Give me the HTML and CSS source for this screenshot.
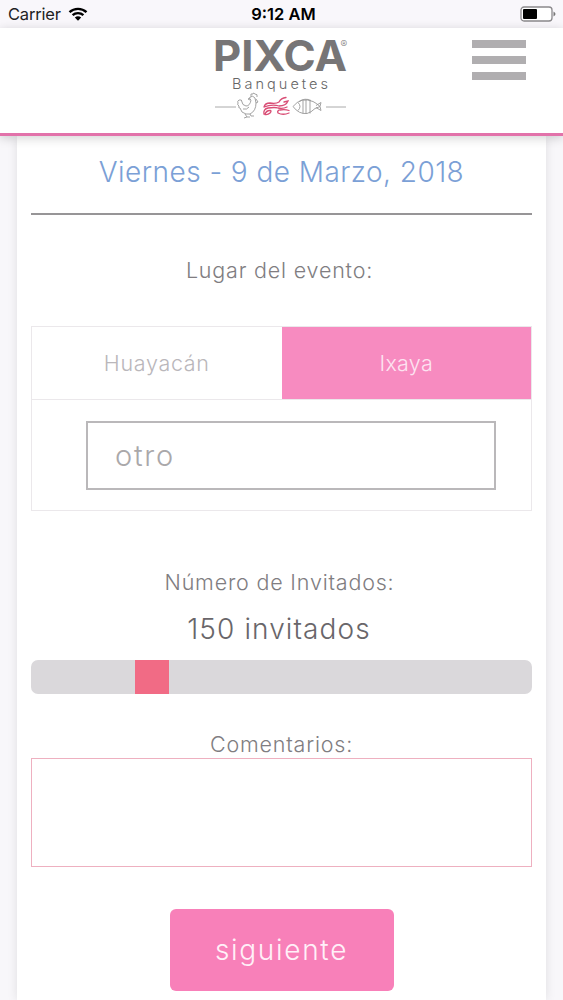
FILE: index.html
```
<!DOCTYPE html>
<html lang="es">
<head>
    <meta charset="UTF-8">
    <meta name="viewport" content="width=device-width, initial-scale=1.0">
    <title>PIXCA Banquetes</title>
    <link rel="stylesheet" href="styles.css">
</head>
<body>
    <div class="status-bar">
        <div class="carrier">
            <span>Carrier</span>
            <svg class="wifi" width="20" height="14" viewBox="0 0 20 14">
                <path d="M1.5 5.2a12.4 12.4 0 0 1 17 0M4.6 8.2a8 8 0 0 1 10.8 0" fill="none" stroke="#000" stroke-width="2.4"/>
                <path d="M6.8 10.6a4.8 4.8 0 0 1 6.400 0L10 13.8z" fill="#000"/>
            </svg>
        </div>
        <div class="time">9:12 AM</div>
        <svg class="battery" width="36" height="16" viewBox="0 0 36 16">
            <rect x="1" y="1" width="31" height="14" rx="3" fill="#fff" stroke="#8b898c" stroke-width="1.3"/>
            <rect x="3" y="3" width="14" height="10" rx="1" fill="#000"/>
            <path d="M33.5 5.5q4 2.500 0 5z" fill="#777"/>
        </svg>
    </div>

    <header class="header">
        <svg class="logo" width="134" height="80" viewBox="0 0 134 80">
            <text class="logo-name" x="-2" y="39" textLength="134" lengthAdjust="spacingAndGlyphs">PIXCA</text>
            <text class="logo-mark" x="125.500" y="16">®</text>
            <text class="logo-sub" x="17" y="56.500" textLength="96">Banquetes</text>
            <path d="M0 75h21M111 75h20" stroke="#aaa" fill="none"/>
            <!-- gallo -->
            <g class="line-icon" transform="translate(0 -2)">
                <path d="M24 70q-2 1-1 3q-1 2 1 3q-1 2 1 2q1 5 6 6h4q6-3 6-11l-1-5q-2-3-5-1q-1 2 1 3q-1 6-5 6q-4-1-4-4q0-3-3-2z"/>
                <path d="M36 66q-1-3 2-2q0-2 2 0q3 0 2 3M35 68l-2 1 2 1M41 69l2 3-2 1M28 79q4 1 6-2"/>
                <path d="M30 84l2 3-3 1M32 87h3M35 84l1 2h3"/>
            </g>
            <!-- langosta -->
            <g class="lobster">
                <path d="M49 75q1-4 6-4q6 1 9-1q2-4 7-4.500M49 75q8-3 15-1q7 0 9-5l-4 1"/>
                <path d="M49 82q-1-5 4-6q7-1 10 0q5 1 9-1M50 82.500q1-4 5-4q2 0 0 2.500q-2 2-5 1.500"/>
                <path d="M64 78q-2 1-1 3q5 2.500 11 0M65 78q5-1 9 .5"/>
            </g>
            <!-- pescado -->
            <g class="line-icon" transform="translate(0 -.5)">
                <path d="M78 75q8-10 20-5q4 2 7 5l-5 2q-4 4-8 5q-8 1-14-7z"/>
                <path d="M101 74l5-3q-2 4 0 8l-5-3M83 71q4 4 0 8M88 69v13M91 68v14M95 69v13M84 70q6-4 12-1"/>
            </g>
        </svg>
        <button class="menu-btn" aria-label="Menú">
            <span></span>
            <span></span>
            <span></span>
        </button>
    </header>

    <main class="card">
        <h1 class="date">Viernes - 9 de Marzo, 2018</h1>
        <hr>

        <h2 class="label place-label">Lugar del evento:</h2>
        <div class="places">
            <div class="tabs">
                <button class="tab">Huayacán</button>
                <button class="tab active">Ixaya</button>
            </div>
            <div class="other">
                <input type="text" placeholder="otro">
            </div>
        </div>

        <h2 class="label guests-label">Número de Invitados:</h2>
        <div class="guests">150 invitados</div>
        <input type="range" class="slider" min="50" max="500" value="150">

        <h2 class="label comments-label">Comentarios:</h2>
        <textarea class="comments"></textarea>

        <button class="next-btn">siguiente</button>
    </main>
</body>
</html>
```

FILE: styles.css
```
* {
    box-sizing: border-box;
}

body {
    margin: 0;
    height: 1000px;
    overflow: hidden;
    display: flex;
    flex-direction: column;
    font-family: Inter, "Open Sans", sans-serif;
    font-weight: 300;
    background-color: #f8f7fa;
}

button,
input,
textarea {
    font-family: inherit;
    font-weight: 300;
}

/* barra de estado */
.status-bar {
    flex: none;
    height: 28px;
    padding: 0 7px 0 8px;
    display: grid;
    grid-template-columns: 1fr auto 1fr;
    align-items: center;
    background-color: #f9f7fb;
    font-size: 16.5px;
    font-weight: 400;
    color: #222;
}

.carrier {
    display: flex;
    align-items: center;
    gap: 7px;
    letter-spacing: -0.2px;
}

.time {
    margin-left: 3px;
    font-weight: 600;
    color: #000;
}

.battery {
    justify-self: end;
}

/* encabezado */
.header {
    flex: none;
    position: relative;
    z-index: 1;
    height: 108px;
    padding: 4px 37px 0 215px;
    display: flex;
    justify-content: space-between;
    align-items: flex-start;
    background-color: #fff;
    border-bottom: 3px solid #e272aa;
    box-shadow: 0 2px 10px rgba(0, 0, 0, 0.18);
}

.logo {
    overflow: visible;
}

.logo-name {
    font-size: 42.500px;
    font-weight: 700;
    fill: #777576;
}

.logo-mark {
    font-size: 10px;
    fill: #777576;
}

.logo-sub {
    font-size: 14.500px;
    font-weight: 300;
    fill: #666;
}

.line-icon {
    fill: none;
    stroke: #999;
    stroke-width: 0.9;
}

.lobster {
    fill: none;
    stroke: #d94d75;
    stroke-width: 1.3;
    stroke-linecap: round;
}

.menu-btn {
    width: 54px;
    margin-top: 8px;
    padding: 0;
    border: none;
    background: none;
    display: flex;
    flex-direction: column;
    gap: 8px;
}

.menu-btn span {
    width: 100%;
    height: 8px;
    background-color: #b0aeb0;
}

/* formulario */
.card {
    flex: 1;
    margin: 0 17px;
    padding: 18px 14px 0;
    display: flex;
    flex-direction: column;
    background-color: #fff;
    box-shadow: 0 0 10px rgba(0, 0, 0, 0.1);
    color: #69666a;
}

.date {
    margin: 0;
    height: 36px;
    line-height: 36px;
    font-size: 28px;
    font-weight: 300;
    letter-spacing: 0.45px;
    text-align: center;
    color: #7ba0d6;
}

hr {
    width: 100%;
    height: 2px;
    margin: 23px 0 0;
    border: none;
    background-color: #979597;
}

.label {
    margin: 0;
    height: 28px;
    line-height: 28px;
    font-size: 21.500px;
    font-weight: 300;
    letter-spacing: 0.8px;
    text-align: center;
    color: #807d81;
}

.place-label {
    margin-top: 41px;
    padding-right: 4px;
}

.places {
    height: 185px;
    margin-top: 42px;
    border: 1px solid #ebe8eb;
    display: flex;
    flex-direction: column;
}

.tabs {
    height: 73px;
    display: flex;
    border-bottom: 1px solid #ebe8eb;
}

.tab {
    flex: 1;
    padding: 0;
    border: none;
    background: none;
    font-size: 21.500px;
    letter-spacing: 0.7px;
    color: #bab7bb;
}

.tab.active {
    background-color: #f78bc0;
    color: #fde3f1;
    letter-spacing: 0.3px;
}

.other {
    flex: 1;
    padding: 21px 35px 20px 54px;
    display: flex;
}

.other input {
    width: 100%;
    padding: 0 27px;
    border: 2px solid #bab8ba;
    border-radius: 0;
    background: #fff;
    font-size: 29px;
    letter-spacing: 1.700px;
}

.other input::placeholder {
    color: #aaa8aa;
}

.guests-label {
    margin-top: 57px;
    padding-right: 4px;
}

.guests {
    height: 36px;
    line-height: 36px;
    margin-top: 15px;
    padding-right: 5px;
    font-size: 28px;
    letter-spacing: 1.100px;
    text-align: center;
}

.slider {
    -webkit-appearance: none;
    appearance: none;
    width: 100%;
    height: 34px;
    margin: 13px 0 0;
    border-radius: 7px;
    background-color: #dad8db;
    outline: none;
}

.slider::-webkit-slider-thumb {
    -webkit-appearance: none;
    width: 34px;
    height: 34px;
    background-color: #f16b85;
}

.comments-label {
    margin-top: 36px;
}

.comments {
    height: 109px;
    padding: 10px;
    border: 1.500px solid #eeb0c0;
    border-radius: 0;
    background-color: #fff;
    resize: none;
    font-size: 21px;
}

.next-btn {
    width: 224px;
    height: 82px;
    margin: 42px auto 0;
    padding: 0;
    border: none;
    border-radius: 6px;
    background-color: #f880b9;
    color: #fff0f8;
    font-size: 28px;
    letter-spacing: 1.700px;
}
```
